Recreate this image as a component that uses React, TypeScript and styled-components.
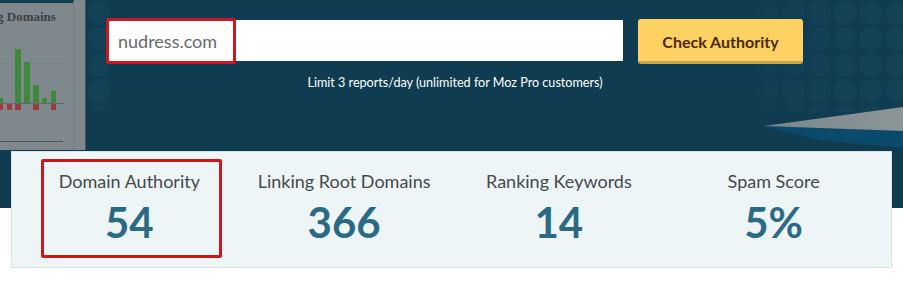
import React from "react";
import styled, { createGlobalStyle } from "styled-components";

const Global = createGlobalStyle`
  html, body { margin: 0; padding: 0; background: #ffffff; }
  body { font-family: Lato, "Open Sans", "Liberation Sans", sans-serif; }
  * { box-sizing: border-box; }
`;

const Page = styled.div`
  width: 903px;
  height: 291px;
  overflow: hidden;
  background: #ffffff;
`;

const Hero = styled.div`
  position: relative;
  height: 208px;
  background: #0f3c50;
  display: flex;
  align-items: flex-start;
  overflow: hidden;
  &::before {
    content: "";
    position: absolute;
    right: 0;
    top: 0;
    width: 175px;
    height: 112px;
    background-image: radial-gradient(circle, rgba(40, 90, 110, 0.18) 0 11px, transparent 12px);
    background-size: 26px 26px;
    -webkit-mask-image: linear-gradient(to right, transparent, #000 60%);
    mask-image: linear-gradient(to right, transparent, #000 60%);
  }
  &::after {
    content: "";
    position: absolute;
    left: 86px;
    top: 0;
    width: 24px;
    height: 110px;
    background-image: radial-gradient(circle, rgba(40, 90, 110, 0.14) 0 11px, transparent 12px);
    background-size: 26px 26px;
  }
`;

const ChartPanel = styled.div`
  width: 86px;
  height: 150px;
  flex: none;
  background: #7f898d;
  border-right: 1px solid #3f5761;
  display: flex;
`;

const ChartInner = styled.div`
  width: 74px;
  height: 100%;
  border-top: 3px solid #123e52;
  border-right: 1px solid #727c80;
  overflow: hidden;
  display: flex;
  flex-direction: column;
`;

const ChartTitle = styled.div`
  height: 20px;
  padding-top: 7px;
  margin-left: -3px;
  text-align: left;
  white-space: nowrap;
  font-family: "Liberation Serif", "DejaVu Serif", serif;
  font-weight: bold;
  font-size: 13px;
  line-height: 14px;
  color: #3c4144;
`;

const SearchColumn = styled.div`
  position: relative;
  z-index: 1;
  padding: 19px 0 0 21px;
  display: flex;
  flex-direction: column;
  align-items: center;
`;

const SearchRow = styled.div`
  display: flex;
  align-items: flex-start;
  gap: 15px;
`;

const InputWrap = styled.div`
  position: relative;
  margin-top: 1px;
`;

const DomainInput = styled.div`
  width: 516px;
  height: 41px;
  background: #ffffff;
  padding-left: 11px;
  display: flex;
  align-items: center;
  font-size: 18px;
  color: #6a6a6a;
`;

const Highlight = styled.div<{ $w: number; $h: number; $l: number; $t: number }>`
  position: absolute;
  left: ${(p) => p.$l}px;
  top: ${(p) => p.$t}px;
  width: ${(p) => p.$w}px;
  height: ${(p) => p.$h}px;
  border: 3px solid #d2161e;
  border-radius: 2px;
  pointer-events: none;
`;

const CheckButton = styled.button`
  width: 165px;
  height: 45px;
  border: none;
  border-bottom: 3px solid #cfa247;
  border-radius: 3px;
  background: #fdd263;
  color: #4a2a0a;
  font-family: Lato, "Open Sans", sans-serif;
  font-weight: bold;
  font-size: 16px;
  padding: 0;
  padding-top: 2px;
`;

const LimitNote = styled.div`
  margin-top: 12px;
  font-size: 12.6px;
  line-height: 14px;
  color: #ffffff;
`;

const Decoration = styled.svg`
  position: absolute;
  right: 0;
  top: 100px;
`;

const StatsCard = styled.div`
  position: relative;
  margin: -57px 0 0 11px;
  width: 881px;
  height: 117px;
  background: #eef5f6;
  border: 1px solid #dce3e4;
  padding: 0 10px;
  display: grid;
  grid-template-columns: repeat(4, 1fr);
`;

const Stat = styled.div`
  position: relative;
  display: flex;
  flex-direction: column;
  align-items: center;
  padding-top: 19px;
`;

const StatLabel = styled.div`
  font-size: 18px;
  line-height: 20px;
  color: #444a4d;
`;

const StatValue = styled.div`
  margin-top: 7px;
  font-weight: bold;
  font-size: 42px;
  line-height: 48px;
  color: #2b6a84;
`;

const bars = [
  { x: 0, w: 3, g: 5, r: true },
  { x: 7, w: 5, g: 0, r: true },
  { x: 15, w: 6, g: 54, r: true },
  { x: 24, w: 6, g: 41, r: false },
  { x: 33, w: 6, g: 18, r: true },
  { x: 42, w: 5, g: 5, r: false },
  { x: 51, w: 5, g: 12, r: true },
];

const stats = [
  { label: "Domain Authority", value: "54", mark: true },
  { label: "Linking Root Domains", value: "366" },
  { label: "Ranking Keywords", value: "14" },
  { label: "Spam Score", value: "5%" },
];

export default function App() {
  return (
    <Page>
      <Global />
      <Hero>
        <ChartPanel>
          <ChartInner>
            <ChartTitle>g Domains</ChartTitle>
            <svg width="74" height="127" viewBox="0 0 74 127">
              <g stroke="#77838a" strokeWidth="1">
                <line x1="0" y1="40.5" x2="64" y2="40.5" opacity="0.4" />
                <line x1="0" y1="60.5" x2="64" y2="60.5" opacity="0.4" />
              </g>
              {bars.map((b, i) => (
                <g key={i}>
                  {b.g > 0 && <rect x={b.x} y={80 - b.g} width={b.w} height={b.g} fill="#3d8a3b" />}
                  {b.r && <rect x={b.x} y={80} width={b.w} height={7} fill="#9a3c40" />}
                </g>
              ))}
              <line x1="0" y1="80.5" x2="64" y2="80.5" stroke="#5f6a6e" strokeWidth="1" />
              <line x1="0" y1="118.5" x2="63" y2="118.5" stroke="#4e585c" strokeWidth="1" />
            </svg>
          </ChartInner>
        </ChartPanel>
        <SearchColumn>
          <SearchRow>
            <InputWrap>
              <DomainInput>nudress.com</DomainInput>
              <Highlight $l={-1} $t={-2} $w={130} $h={46} />
            </InputWrap>
            <CheckButton>Check Authority</CheckButton>
          </SearchRow>
          <LimitNote>Limit 3 reports/day (unlimited for Moz Pro customers)</LimitNote>
        </SearchColumn>
        <Decoration width="143" height="51" viewBox="0 0 143 51">
          <defs>
            <linearGradient id="gy" x1="0" y1="0" x2="1" y2="0">
              <stop offset="0" stopColor="#7a868b" />
              <stop offset="1" stopColor="#8c9598" />
            </linearGradient>
          </defs>
          <polygon points="4,26 143,31 143,48 60,40" fill="#0b4a6a" />
          <polygon points="4,26 143,7 143,31" fill="url(#gy)" />
        </Decoration>
      </Hero>
      <StatsCard>
        {stats.map((s) => (
          <Stat key={s.label}>
            <StatLabel>{s.label}</StatLabel>
            <StatValue>{s.value}</StatValue>
            {s.mark && <Highlight $l={19} $t={7} $w={181} $h={99} />}
          </Stat>
        ))}
      </StatsCard>
    </Page>
  );
}
